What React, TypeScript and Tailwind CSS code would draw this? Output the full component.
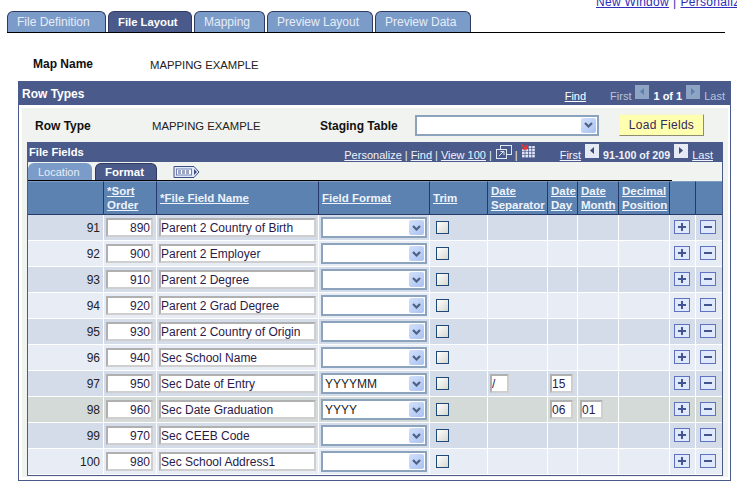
import type { ReactNode } from "react";

const NAVY = "bg-[#4a5a8a]";

type Row = {
  n: number;
  sort: number;
  name: string;
  format?: string;
  sep?: string;
  day?: string;
  month?: string;
  tone: string;
};

const DARK = "bg-[#d5dce9]";
const LIGHT = "bg-[#e7ecf5]";

const rows: Row[] = [
  { n: 91, sort: 890, name: "Parent 2 Country of Birth", tone: DARK },
  { n: 92, sort: 900, name: "Parent 2 Employer", tone: LIGHT },
  { n: 93, sort: 910, name: "Parent 2 Degree", tone: DARK },
  { n: 94, sort: 920, name: "Parent 2 Grad Degree", tone: LIGHT },
  { n: 95, sort: 930, name: "Parent 2 Country of Origin", tone: DARK },
  { n: 96, sort: 940, name: "Sec School Name", tone: LIGHT },
  { n: 97, sort: 950, name: "Sec Date of Entry", format: "YYYYMM", sep: "/", day: "15", tone: DARK },
  { n: 98, sort: 960, name: "Sec Date Graduation", format: "YYYY", day: "06", month: "01", tone: "bg-[#d4dad8]" },
  { n: 99, sort: 970, name: "Sec CEEB Code", tone: DARK },
  { n: 100, sort: 980, name: "Sec School Address1", tone: LIGHT },
];

function Tab({ label, width, active }: { label: string; width: string; active?: boolean }) {
  return (
    <div
      className={`${width} h-[21px] flex items-center pl-[9px] rounded-t-[6px] border border-b-0 border-[#2f3a5f] ${
        active ? `${NAVY} text-white font-bold text-[11.3px]` : "bg-[#7b9cc9] text-[#e6edf7]"
      }`}
    >
      {label}
    </div>
  );
}

function Chevron() {
  return (
    <div className="w-[15px] h-full rounded-[2px] bg-gradient-to-br from-[#d3e0fb] to-[#a9c2f2] flex items-center justify-center">
      <svg width="9" height="6" viewBox="0 0 9 6">
        <path d="M1 1l3.5 3.5L8 1" fill="none" stroke="#4f6285" strokeWidth="2.2" />
      </svg>
    </div>
  );
}

function SelectBox({ value, width, height }: { value?: string; width: string; height: string }) {
  return (
    <div className={`${width} ${height} flex items-center justify-between bg-white border-2 border-[#8ba3bc] pr-px py-px`}>
      <span className="pl-[2px] text-[#222222]">{value}</span>
      <Chevron />
    </div>
  );
}

function TextBox({ value, width, right }: { value?: string; width: string; right?: boolean }) {
  return (
    <input
      readOnly
      value={value ?? ""}
      className={`${width} h-[19px] bg-white border-2 border-[#cfcfcf] border-t-[#b0b0b0] border-l-[#b0b0b0] pl-0 pr-px text-[12px] text-[#2a1a4a] outline-none ${
        right ? "text-right" : ""
      }`}
    />
  );
}

function Arrow({ dir, faded }: { dir: "left" | "right"; faded?: boolean }) {
  return (
    <svg width="14" height="14" viewBox="0 0 14 14" className="shrink-0">
      <rect width="14" height="14" fill={faded ? "#8ea4c4" : "#e6eaf4"} />
      <path d={dir === "left" ? "M9 3v7L5 6.5z" : "M5 3v7l4-3.5z"} fill={faded ? "#5f7fb0" : "#3d4c78"} />
    </svg>
  );
}

function WindowIcon() {
  return (
    <svg width="16" height="14" viewBox="0 0 16 14" className="shrink-0">
      <rect x="4.5" y="0.5" width="11" height="9" fill="#4a5a8a" stroke="#dfe6f4" />
      <rect x="0.5" y="4.5" width="10" height="9" fill="#4a5a8a" stroke="#dfe6f4" />
      <path d="M3 11l4-4M4.5 6.5H8V10" fill="none" stroke="#dfe6f4" />
    </svg>
  );
}

function GridIcon() {
  const cells: ReactNode[] = [];
  for (let y = 0; y < 4; y++) {
    for (let x = 0; x < 4; x++) {
      if (y === 0 && x < 2) continue;
      cells.push(<rect key={`${x}-${y}`} x={1 + x * 3.4} y={2 + y * 3} width="2.6" height="2.4" fill="#dfe3f7" />);
    }
  }
  return (
    <svg width="15" height="14" viewBox="0 0 15 14" className="shrink-0">
      {cells}
      <path d="M0 0l5 5M1.5 5H5.5V1" fill="none" stroke="#e23a3a" strokeWidth="1.6" />
    </svg>
  );
}

function ExpandIcon() {
  return (
    <svg width="27" height="14" viewBox="0 0 27 14">
      <path d="M1 1.5h20l5 5.5-5 5.5H1z" fill="#e2e9f8" stroke="#3f4f86" />
      <rect x="3.5" y="4" width="15" height="6" fill="#fbfcff" stroke="#6d7fb5" />
      <path d="M5 6h3M9 6h3M13 6h3M5 8h3M9 8h3M13 8h3" stroke="#3f4f86" />
      <path d="M21 4l3 3-3 3z" fill="#3f4f86" />
    </svg>
  );
}

function AddRemove({ kind }: { kind: "add" | "remove" }) {
  return (
    <div className="w-[16px] h-[14px] -mt-[2px] bg-[#e0e9fb] border border-[#5f72c0] flex items-center justify-center">
      <svg width="10" height="10" viewBox="0 0 10 10">
        <rect x="1" y="4" width="8" height="2" fill="#43558f" />
        {kind === "add" && <rect x="4" y="1" width="2" height="8" fill="#43558f" />}
      </svg>
    </div>
  );
}

function HeadCell({ width, children, last }: { width: string; children?: ReactNode; last?: boolean }) {
  return (
    <div
      className={`${width} shrink-0 flex items-center pl-[3px] bg-[#5b82b1] border-t border-t-[#7f9cc2] ${
        last ? "" : "border-r border-r-[#26396a]"
      } text-[#eef2fa] font-bold text-[11.5px] leading-[14px] underline`}
    >
      <div>{children}</div>
    </div>
  );
}

function Cell({ width, tone, children, className }: { width: string; tone: string; children?: ReactNode; className?: string }) {
  return (
    <div className={`${width} shrink-0 flex items-center border-r border-r-white ${tone} ${className ?? ""}`}>{children}</div>
  );
}

function GridRow({ row }: { row: Row }) {
  const t = row.tone;
  return (
    <div className="flex h-[26px] border-b border-b-white">
      <Cell width="w-[76px]" tone={t} className="justify-end pr-[3px] text-[#222222]">
        {row.n}
      </Cell>
      <Cell width="w-[53px]" tone={t} className="pl-[2px]">
        <TextBox value={String(row.sort)} width="w-[47px]" right />
      </Cell>
      <Cell width="w-[162px]" tone={t} className="pl-[2px]">
        <TextBox value={row.name} width="w-[157px]" />
      </Cell>
      <Cell width="w-[111px]" tone={t} className="pl-[2px]">
        <SelectBox value={row.format} width="w-[106px]" height="h-[21px]" />
      </Cell>
      <Cell width="w-[58px]" tone={t} className="pl-[6px]">
        <div className="w-[13px] h-[13px] border border-[#1f4a78] bg-gradient-to-br from-white to-[#d8d8d2]" />
      </Cell>
      <Cell width="w-[60px]" tone={t} className="pl-[2px]">
        {row.sep && <TextBox value={row.sep} width="w-[19px]" />}
      </Cell>
      <Cell width="w-[30px]" tone={t} className="pl-[2px]">
        {row.day && <TextBox value={row.day} width="w-[23px]" />}
      </Cell>
      <Cell width="w-[41px]" tone={t} className="pl-[2px]">
        {row.month && <TextBox value={row.month} width="w-[23px]" />}
      </Cell>
      <Cell width="w-[51px]" tone={t} />
      <Cell width="w-[26px]" tone={t} className="pl-[4px]">
        <AddRemove kind="add" />
      </Cell>
      <div className={`w-[26px] shrink-0 flex items-center pl-[4px] ${t}`}>
        <AddRemove kind="remove" />
      </div>
    </div>
  );
}

function Sep() {
  return <span className="mx-[3px] mt-[6px] text-[#e8edf7]">|</span>;
}

export default function App() {
  return (
    <div className="w-[737px] h-[486px] overflow-hidden bg-white text-[12px] leading-[14px] font-['Liberation_Sans',Arial,sans-serif] text-[#111111]">
      {/* Top links, cut off by the window edge */}
      <div className="h-[11px] flex items-end pl-[596px] pb-[2px] overflow-hidden whitespace-nowrap text-[#2e2eb8] tracking-[0.3px]">
        <span className="underline">New Window</span>
        <span className="px-[4px]">|</span>
        <span className="underline">Personalize Page</span>
      </div>

      {/* Page tabs */}
      <div className="ml-[7px] w-[718px] flex gap-[2px] border-b border-b-black">
        <Tab label="File Definition" width="w-[99px]" />
        <Tab label="File Layout" width="w-[84px]" active />
        <Tab label="Mapping" width="w-[71px]" />
        <Tab label="Preview Layout" width="w-[106px]" />
        <Tab label="Preview Data" width="w-[96px]" />
      </div>

      {/* Map name */}
      <div className="h-[48px] flex pl-[33px] pt-[24px]">
        <div className="w-[117px] font-bold">Map Name</div>
        <div className="text-[#222222] pt-px text-[11.3px]">MAPPING EXAMPLE</div>
      </div>

      {/* Row Types box */}
      <div className="ml-[18px] w-[713px] h-[400px] border border-[#4a5a8a]">
        <div className={`h-[23px] flex justify-between ${NAVY} pl-[3px] pr-[5px] text-white`}>
          <span className="font-bold mt-[5px]">Row Types</span>
          <div className="flex items-start text-[#b9c4dc] text-[11px]">
            <span className="underline text-white mr-[24px] mt-[7px]">Find</span>
            <span className="mt-[7px]">First</span>
            <span className="mx-[4px] mt-[3px]">
              <Arrow dir="left" faded />
            </span>
            <span className="font-bold text-white mt-[7px]">1 of 1</span>
            <span className="mx-[4px] mt-[3px]">
              <Arrow dir="right" faded />
            </span>
            <span className="mt-[7px]">Last</span>
          </div>
        </div>

        <div className="ml-[3px] mt-[3px] w-[706px] h-[369px] bg-[#f0f3ef]">
          {/* Row type line */}
          <div className="h-[34px] flex items-center pl-[13px]">
            <div className="w-[117px] font-bold pt-px">Row Type</div>
            <div className="w-[168px] text-[#222222] pt-px text-[11.3px]">MAPPING EXAMPLE</div>
            <div className="w-[95px] font-bold pt-px">Staging Table</div>
            <SelectBox width="w-[184px]" height="h-[21px]" />
            <button className="ml-[20px] mb-[1px] w-[85px] h-[22px] bg-[#ffffb0] border border-t-[#f4f4d8] border-l-[#f4f4d8] border-r-[#8d8d70] border-b-[#8d8d70] text-[#35285a] text-[12px] tracking-[0.3px]">
              Load Fields
            </button>
          </div>

          {/* File Fields grid */}
          <div className="ml-[5px] w-[696px] border border-t-0 border-[#4a5a8a]">
            <div className={`-mx-px h-[20px] flex justify-between ${NAVY} pl-[2px] pr-[10px] text-white`}>
              <span className="font-bold mt-[3px] text-[11.2px]">File Fields</span>
              <div className="flex items-start text-[#f0f3fa] whitespace-nowrap text-[11px]">
                <span className="underline mt-[6px]">Personalize</span>
                <Sep />
                <span className="underline mt-[6px]">Find</span>
                <Sep />
                <span className="underline mt-[6px]">View 100</span>
                <Sep />
                <span className="mt-[3px] ml-px"><WindowIcon /></span>
                <Sep />
                <span className="mt-[2px] mr-[24px]"><GridIcon /></span>
                <span className="underline mt-[6px]">First</span>
                <span className="mx-[4px] mt-[2px]"><Arrow dir="left" /></span>
                <span className="font-bold mt-[6px] text-[10.7px]">91-100 of 209</span>
                <span className="mx-[4px] mt-[2px]"><Arrow dir="right" /></span>
                <span className="underline mt-[6px]">Last</span>
              </div>
            </div>

            <div className="w-[644px] h-[19px] flex items-end gap-[3px] border-b border-b-black">
              <div className="w-[64px] h-[17px] flex items-center pl-[10px] rounded-t-[6px] bg-[#7b9cc9] text-[#e6edf7] text-[11px]">
                Location
              </div>
              <div className={`w-[62px] h-[17px] flex items-center pl-[9px] rounded-t-[6px] border border-b-0 border-[#2f3a5f] ${NAVY} text-white font-bold text-[11.5px]`}>
                Format
              </div>
              <div className="ml-[13px] mb-[1px]">
                <ExpandIcon />
              </div>
            </div>

            <div className="flex h-[34px] border-b border-b-[#26396a]">
              <HeadCell width="w-[76px]" />
              <HeadCell width="w-[53px]">
                *Sort
                <br />
                Order
              </HeadCell>
              <HeadCell width="w-[162px]">*File Field Name</HeadCell>
              <HeadCell width="w-[111px]">Field Format</HeadCell>
              <HeadCell width="w-[58px]">Trim</HeadCell>
              <HeadCell width="w-[60px]">
                Date
                <br />
                Separator
              </HeadCell>
              <HeadCell width="w-[30px]">
                Date
                <br />
                Day
              </HeadCell>
              <HeadCell width="w-[41px]">
                Date
                <br />
                Month
              </HeadCell>
              <HeadCell width="w-[51px]">
                Decimal
                <br />
                Position
              </HeadCell>
              <HeadCell width="w-[26px]" />
              <HeadCell width="w-[26px]" last />
            </div>

            {rows.map((r) => (
              <GridRow key={r.n} row={r} />
            ))}
          </div>
        </div>
      </div>
    </div>
  );
}
